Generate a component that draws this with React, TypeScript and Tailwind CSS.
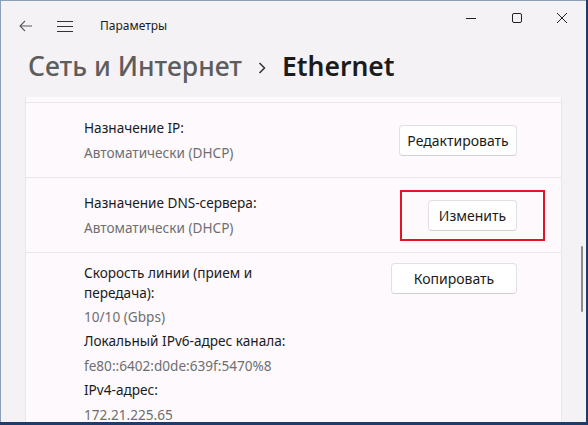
import React from "react";

function Btn({ label, w }: { label: string; w: string }) {
  return (
    <div className={`flex h-[31px] items-center justify-center rounded-[4px] border border-[#e3e0e3] border-b-[#d2cfd2] bg-white text-[14px] text-[#1b1b1b] ${w}`}>
      {label}
    </div>
  );
}

export default function App() {
  return (
    <div className="h-[425px] w-[588px] overflow-hidden bg-[#1e3c6a]" style={{ fontFamily: '"Noto Sans", "Open Sans", sans-serif' }}>
      <div className="flex h-[422px] w-[586px] flex-col border-l border-t border-[#8b9fb6] bg-[#f5f2f5]">
        {/* title bar */}
        <div className="flex h-[47px] items-start justify-between">
          <div className="flex h-[50px] items-center">
            <svg className="ml-[18px]" width="14" height="12" viewBox="0 0 14 12" fill="none" stroke="#5c5c5c" strokeWidth="1.1">
              <path d="M13 6H1.5M6 1L1 6l5 5" />
            </svg>
            <svg className="ml-[24px]" width="16" height="11" viewBox="0 0 16 11" fill="none" stroke="#333" strokeWidth="1">
              <path d="M0 0.5h16M0 5.5h16M0 10.5h16" />
            </svg>
            <span className="ml-[27px] text-[12px] text-[#1b1b1b]">Параметры</span>
          </div>
          <div className="flex h-[34px] items-center">
            <svg width="46" height="12" viewBox="0 0 46 12" fill="none" stroke="#222" strokeWidth="1">
              <path d="M18 6.5h10" />
            </svg>
            <svg width="46" height="12" viewBox="0 0 46 12" fill="none" stroke="#222" strokeWidth="1">
              <rect x="18.5" y="1.5" width="9" height="9" rx="1.5" />
            </svg>
            <svg width="46" height="12" viewBox="0 0 46 12" fill="none" stroke="#222" strokeWidth="1">
              <path d="M17 1l10 10M27 1L17 11" />
            </svg>
          </div>
        </div>

        {/* heading */}
        <div className="flex h-[49px] items-start pl-[27px] pt-[5px] text-[26.5px] leading-none">
          <span className="font-medium text-[#5d5d5d]">Сеть и Интернет</span>
          <svg className="ml-[16px] mr-[16px] mt-[9px]" width="8" height="12" viewBox="0 0 8 12" fill="none" stroke="#333" strokeWidth="1.5">
            <path d="M1.5 1l5 5-5 5" />
          </svg>
          <span className="font-semibold text-[#1b1b1b]">Ethernet</span>
        </div>

        {/* content */}
        <div className="flex min-h-0 flex-1">
          <div className="ml-[24px] w-[537px] border-x border-[#e9e5e9] bg-[#fdf9fd] text-[13.6px]">
            <div className="h-[5px]" />
            <div className="flex h-[75px] items-center border-t border-[#ebe7eb] pl-[58px] pr-[44px]">
              <div className="flex-1 leading-[25px]">
                <div className="text-[#1b1b1b]">Назначение IP:</div>
                <div className="text-[#6f6f6f]">Автоматически (DHCP)</div>
              </div>
              <Btn label="Редактировать" w="w-[118px]" />
            </div>
            <div className="flex h-[75px] items-center border-t border-[#ebe7eb] pl-[58px] pr-[16px]">
              <div className="flex-1 leading-[25px]">
                <div className="text-[#1b1b1b]">Назначение DNS-сервера:</div>
                <div className="text-[#6f6f6f]">Автоматически (DHCP)</div>
              </div>
              <div className="flex h-[51px] w-[145px] items-center justify-end border-2 border-[#e81224] pr-[26px]">
                <Btn label="Изменить" w="w-[89px]" />
              </div>
            </div>
            <div className="flex border-t border-[#ebe7eb] pl-[58px] pr-[44px] pt-[10px]">
              <div className="flex-1 leading-[20px]">
                <div className="w-[220px] text-[#1b1b1b]">Скорость линии (прием и передача):</div>
                <div className="mt-[4px] text-[#6f6f6f]">10/10 (Gbps)</div>
                <div className="mt-[4px] text-[#1b1b1b]">Локальный IPv6-адрес канала:</div>
                <div className="mt-[5px] text-[#6f6f6f]">fe80::6402:d0de:639f:5470%8</div>
                <div className="mt-[4px] text-[#1b1b1b]">IPv4-адрес:</div>
                <div className="mt-[5px] text-[#6f6f6f]">172.21.225.65</div>
              </div>
              <Btn label="Копировать" w="w-[126px]" />
            </div>
          </div>
          <div className="flex flex-1 justify-end pr-[3px]">
            <div className="mt-[149px] h-[66px] w-[2px] rounded-full bg-[#8a8a8a]" />
          </div>
        </div>
      </div>
    </div>
  );
}
